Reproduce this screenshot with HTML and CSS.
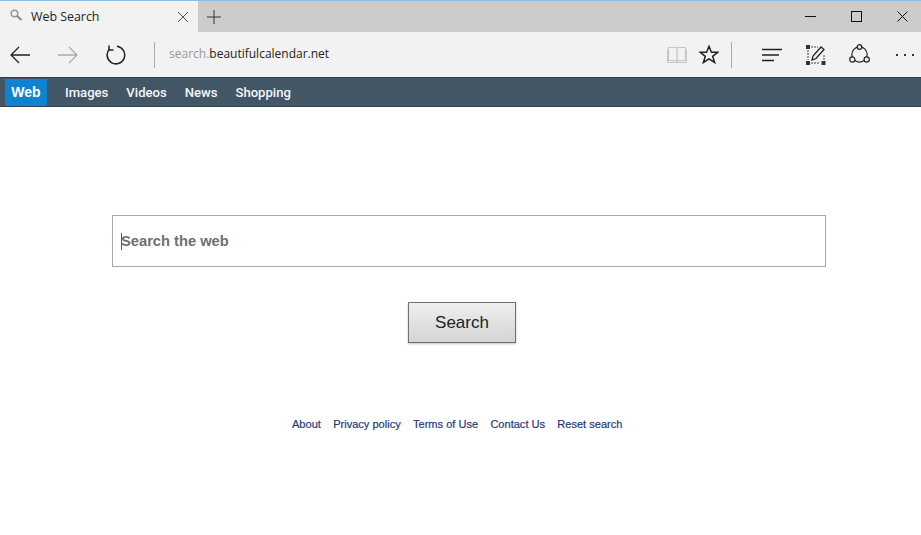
FILE: index.html
```html
<!DOCTYPE html>
<html lang="en">
<head>
<meta charset="utf-8">
<title>Web Search</title>
<link rel="stylesheet" href="styles.css">
</head>
<body>
<div class="titlebar">
  <div class="tab">
    <svg class="tab-icon" width="14" height="14" viewBox="0 0 14 14"><circle cx="5.500" cy="5.500" r="3.300" fill="none" stroke="#999" stroke-width="1.600"/><path d="M8 8l4.500 4" stroke="#888" stroke-width="2" fill="none"/></svg>
    <span class="tab-title">Web Search</span>
    <svg class="tab-close" width="12" height="12" viewBox="0 0 12 12"><path d="M1 1l10 10M11 1L1 11" stroke="#555" stroke-width="1" fill="none"/></svg>
  </div>
  <svg class="new-tab" width="14" height="14" viewBox="0 0 14 14"><path d="M7 0v14M0 7h14" stroke="#333" stroke-width="1" fill="none"/></svg>
  <div class="window-controls">
    <svg width="11" height="11" viewBox="0 0 11 11"><path d="M0 5.500h11" stroke="#111" stroke-width="1" fill="none"/></svg>
    <svg width="11" height="11" viewBox="0 0 11 11"><rect x=".5" y=".5" width="10" height="10" stroke="#111" stroke-width="1" fill="none"/></svg>
    <svg width="11" height="11" viewBox="0 0 11 11"><path d="M.5.5l10 10M10.500.5l-10 10" stroke="#111" stroke-width="1" fill="none"/></svg>
  </div>
</div>
<div class="toolbar">
  <svg class="ic-back" width="22" height="18" viewBox="0 0 22 18"><path d="M21 9H2M10 1L2 9l8 8" stroke="#222" stroke-width="1.300" fill="none"/></svg>
  <svg class="ic-forward" width="22" height="18" viewBox="0 0 22 18"><path d="M1 9h19M12 1l8 8-8 8" stroke="#aaa" stroke-width="1.300" fill="none"/></svg>
  <svg class="ic-refresh" width="20" height="20" viewBox="0 0 20 20"><path d="M3.500 4A8.800 8.800 0 1 0 11 1.300" stroke="#222" stroke-width="1.500" fill="none"/><path d="M3 .5v4.500h4.500" stroke="#222" stroke-width="1.500" fill="none"/></svg>
  <div class="divider addr-div"></div>
  <div class="address"><span class="addr-muted">search.</span>beautifulcalendar.net</div>
  <svg class="ic-book" width="20" height="18" viewBox="0 0 20 18"><path d="M1.500 1.500h7.500l1 1 1-1h7.500v13h-7.500l-1 1-1-1h-7.500zM10 2.500v13M.5 3v13.500h19V3" stroke="#c6c6c6" stroke-width="1.200" fill="none"/></svg>
  <svg class="ic-star" width="20" height="19" viewBox="0 0 20 19"><path d="M10 1.300l2.400 6h6.300l-5 4 1.900 6.200-5.600-3.700-5.600 3.700 1.900-6.200-5-4h6.300z" stroke="#222" stroke-width="1.500" fill="none"/></svg>
  <div class="divider tools-div"></div>
  <svg class="ic-hub" width="21" height="14" viewBox="0 0 21 14"><path d="M0 1.500h20M0 7h17M0 12.500h12" stroke="#222" stroke-width="1.300" fill="none"/></svg>
  <svg class="ic-note" width="20" height="20" viewBox="0 0 20 20"><path d="M5 2h7M2 5v10M5 18h9M18 10v5" stroke="#444" stroke-width="1" stroke-dasharray="2 1" fill="none"/><path d="M0 0h4v4H0zM0 16h4v4H0zM15.500 16h4v4h-4z" fill="#333"/><path d="M6 15l1-4 8-9 3 2.500-8 9z" stroke="#222" stroke-width="1.300" fill="none"/></svg>
  <svg class="ic-share" width="21" height="21" viewBox="0 0 21 21"><circle cx="10.500" cy="10.500" r="7.700" stroke="#222" stroke-width="1.200" fill="none"/><circle cx="10.500" cy="3" r="2.300" fill="#f2f2f2" stroke="#222" stroke-width="1.200"/><circle cx="3.300" cy="15.500" r="2.600" fill="#f2f2f2" stroke="#222" stroke-width="1.200"/><circle cx="17.700" cy="15.500" r="2.600" fill="#f2f2f2" stroke="#222" stroke-width="1.200"/></svg>
  <div class="ic-more"><i></i><i></i><i></i></div>
</div>
<nav class="sitebar">
  <a class="site-link active">Web</a>
  <a class="site-link">Images</a>
  <a class="site-link">Videos</a>
  <a class="site-link">News</a>
  <a class="site-link">Shopping</a>
</nav>
<main class="content">
  <div class="search-box"><span class="caret"></span><span class="placeholder">Search the web</span></div>
  <button class="search-button">Search</button>
  <footer class="links">
    <a>About</a><a>Privacy policy</a><a>Terms of Use</a><a>Contact Us</a><a>Reset search</a>
  </footer>
</main>
</body>
</html>
```
FILE: styles.css
```css
* { box-sizing: border-box; }
html, body { margin: 0; height: 100%; }
body { background: #fff; font-family: "Liberation Sans", Arial, sans-serif; overflow: hidden; }

.titlebar { height: 32px; background: #cccccc; border-top: 1px solid #8fbcdc; display: flex; align-items: center; }
.tab { width: 198px; height: 31px; background: #f2f2f2; display: flex; align-items: center; padding-left: 9px; }
.tab-icon { margin-top: -3px; }
.tab-title { font: 12.400px "Open Sans", sans-serif; color: #222; margin-left: 8px; width: 146px; }
.new-tab { margin-left: 9px; }
.window-controls { margin-left: auto; display: flex; align-items: center; gap: 35px; padding-right: 13px; }

.toolbar { height: 45px; background: #f2f2f2; display: flex; align-items: center; }
.ic-back { margin-left: 9px; }
.ic-forward { margin-left: 26px; }
.ic-refresh { margin-left: 27px; }
.divider { width: 1px; height: 26px; background: #a9a9a9; }
.addr-div { margin-left: 28px; }
.address { font: 12px "Open Sans", sans-serif; color: #222; margin-left: 14px; width: 498px; position: relative; top: -1px; }
.addr-muted { color: #999; }
.ic-star { margin-left: 12px; }
.tools-div { margin-left: 12px; }
.ic-hub { margin-left: 30px; }
.ic-note { margin-left: 23px; }
.ic-share { margin-left: 23px; }
.ic-more { margin-left: 26px; display: flex; gap: 6px; }
.ic-more i { width: 2px; height: 2px; background: #333; display: block; }

.sitebar { height: 30px; background: #435665; border-top: 1px solid #2e3d4c; border-bottom: 1px solid #33444f; display: flex; align-items: center; padding-left: 5px; }
.site-link { font: 500 13.100px Roboto, sans-serif; color: #f4f6f8; margin-left: 18px; }
.site-link.active { background: #0f83d0; color: #fff; font: 700 14px "Liberation Sans", sans-serif; width: 42px; height: 27px; margin: 0; line-height: 27px; text-align: center; }

.content { display: flex; flex-direction: column; align-items: flex-start; padding: 108px 0 0 112px; }
.search-box { width: 714px; height: 52px; border: 1px solid #a8a8a8; display: flex; align-items: center; padding-left: 8px; }
.caret { width: 1px; height: 17px; background: #555; margin-right: -1px; }
.placeholder { font: 700 14.700px/16px "Liberation Sans", sans-serif; color: #6f6f6f; }
.search-button { width: 108px; height: 41px; margin: 35px 0 0 296px; border: 1px solid #707070; background: linear-gradient(#efefef, #d4d4d4); box-shadow: 0 1px 2px rgba(0,0,0,.25); font: 17px "Liberation Sans", sans-serif; color: #222; padding: 0; }
.links { display: flex; gap: 12.300px; margin: 75px 0 0 180px; font-size: 11.050px; color: #1e3a78; -webkit-text-stroke: .2px #1e3a78; }
```
